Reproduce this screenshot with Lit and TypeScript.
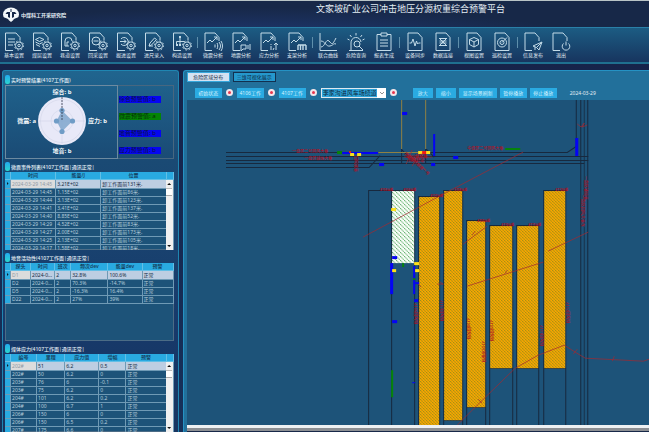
import { LitElement, html, svg, css } from "lit";
import { customElement, property } from "lit/decorators.js";
import { classMap } from "lit/directives/class-map.js";

const sheet = svg`<path d="M16 8V5.5L12 1H1.5v17.5H9"/>`;
const fullSheet = svg`<path d="M17 5.5L13 1H3v17.5h14z"/>`;
const gear = svg`<circle cx="15" cy="13.5" r="3.6"/><circle cx="15" cy="13.5" r="1.2"/><circle cx="15" cy="13.5" r="4.6" stroke-dasharray="1.6 2"/>`;
const trend = svg`<path d="M4 11l3-3 2 2 5-5M11 5h3v3"/>`;
const openSheet = svg`<path d="M16 9V5.5L12 1H2v17.5h7"/>`;

const icons: Record<string, unknown> = {
  base: svg`${sheet}${gear}<path d="M4 7h7M4 10h7M4 13h5"/>`,
  layers: svg`${sheet}${gear}<path d="M3.5 7.5l4-2 4.500 2-4.500 2zM3.500 10l4 2 3-1.500M4 12.500l4 2"/>`,
  arch: svg`${sheet}${gear}<path d="M5 14V9a3.500 3.500 0 0 1 7 0M5 14h4M7 14v-4h2"/>`,
  mining: svg`${sheet}${gear}<circle cx="8" cy="9" r="4"/><path d="M5.500 9h5"/>`,
  advance: svg`${sheet}${gear}<path d="M5 7a4 4 0 1 1 0 5M4 9.500h6M8 7.500l2 2-2 2"/>`,
  entry: svg`${sheet}${gear}<path d="M5 14l1-3 4.500-5 2 1.500-5 5.500zM5 14h4"/>`,
  tree: svg`${sheet}${gear}<path d="M8 5v4M4.500 13V9.500h8M8 9v4"/><path d="M7 5h2M4 13h2M7 13h2" stroke-width="2"/>`,
  wave: svg`${openSheet}${trend}<path d="M12 12.500v3M14 11c1 2 1 4 0 6M16 10c2 3 2 5 0 8M18 9c2 3 2 7 0 10"/>`,
  quake: svg`${openSheet}${trend}<path d="M10 13h5v4h-3l-2 2zM17 13v4M19 12v6"/>`,
  stress: svg`${openSheet}${trend}<path d="M12 14v4M12 12v1M17 11v7M15 13l2-2 2 2M14 18l1-2"/>`,
  frame: svg`${openSheet}${trend}<path d="M11 13h8M11 18v-5M13.500 18v-5M16 18v-5M19 18v-5" stroke-width="1.400"/>`,
  curves: svg`<path d="M2 1v17.500h17M3 15c4 0 5-9 8-6s3 5 7-3M3 9c4 0 5 6 9 5s3-3 6-2"/>`,
  alarm: svg`<path d="M3 18.500h14M5 18V11a5 5 0 0 1 10-1M10 1v2.500M4 3l1.500 2M16 3l-1.500 2M1.500 7l2 1M18.500 7l-2 1"/><circle cx="11" cy="12" r="3"/><path d="M13 14l4 4"/>`,
  report: svg`<path d="M7 2.500H3v16h14v-16h-4M7 1h6v3H7zM6 8h8M6 11h8M6 14h8"/>`,
  pulse: svg`${fullSheet}<path d="M4.500 11h2l1.500-4 2 7 1.500-5 1 3 1-1h2"/>`,
  link: svg`${fullSheet}<path d="M6 6.500h8M6 13.500h8M6.500 9h7M6.500 11h7M7 7l6 6M13 7l-6 6"/>`,
  cube: svg`${fullSheet}<path d="M10 5.500l4.500 2v5L10 15l-4.500-2.500v-5zM5.500 7.500L10 10l4.500-2.500M10 10v5"/>`,
  target: svg`${fullSheet}<circle cx="10" cy="10.500" r="4.500"/><circle cx="10" cy="10.500" r="2"/><path d="M10 10.500l5-5"/>`,
  plane: svg`${openSheet}<path d="M10 14l9-4-3 8-2.500-2.500zM13.500 15.500l5-5M12 15v3"/>`,
  power: svg`${openSheet}<path d="M12.500 11.500a3.800 3.800 0 1 0 5 0M15 9.500v4"/>`,
};

const tools: string[][][] = [
  [["base", "基本设置"], ["layers", "煤层设置"], ["arch", "巷道设置"], ["mining", "回采设置"], ["advance", "掘进设置"], ["entry", "进尺录入"], ["tree", "构造设置"]],
  [["wave", "微震分析"], ["quake", "地震分析"], ["stress", "应力分析"], ["frame", "支架分析"]],
  [["curves", "联合曲线"], ["alarm", "危险查询"], ["report", "报表生成"]],
  [["pulse", "设备同步"], ["link", "数据连接"]],
  [["cube", "视图设置"], ["target", "巡检设置"]],
  [["plane", "信息发布"], ["power", "退出"]],
];

const eventRows = [
  ["2024-03-29 14:45", "3.21E+02", "卸工作面前131米."],
  ["2024-03-29 14:45", "1.15E+02", "卸工作面前86米."],
  ["2024-03-29 14:44", "3.13E+02", "卸工作面前123米."],
  ["2024-03-29 14:41", "3.41E+02", "卸工作面前137米."],
  ["2024-03-29 14:40", "8.85E+02", "卸工作面前52米."],
  ["2024-03-29 14:29", "4.52E+02", "卸工作面前83米."],
  ["2024-03-29 14:27", "2.00E+02", "卸工作面前173米."],
  ["2024-03-29 14:25", "2.13E+02", "卸工作面前105米."],
  ["2024-03-29 14:17", "1.58E+02", "卸工作面前18米."],
];
const probeRows = [
  ["D1", "2024-0...", "2", "32.8%", "100.6%", "正常"],
  ["D2", "2024-0...", "2", "70.3%", "-14.7%", "正常"],
  ["D5", "2024-0...", "2", "-16.3%", "16.4%", "正常"],
  ["D22", "2024-0...", "2", "27%", "39%", "正常"],
];
const stressRows = [
  ["202#", "51", "6.2", "0.5", "正常"],
  ["202#", "50", "6.2", "0", "正常"],
  ["203#", "76", "6", "-0.1", "正常"],
  ["203#", "75", "6.2", "0", "正常"],
  ["204#", "101", "6.2", "0.2", "正常"],
  ["204#", "100", "6.7", "1", "正常"],
  ["206#", "150", "6", "0", "正常"],
  ["206#", "150", "6.5", "0.2", "正常"],
  ["207#", "175", "6.6", "0", "正常"],
];

@customElement("tool-bar")
class ToolBar extends LitElement {
  static styles = css`
    :host { display: flex; align-items: stretch; height: 34px; border-top: 1px solid #2a80a8; border-bottom: 2px solid #1f6f8f;
      background: linear-gradient(#1c5c83, #17355f); overflow: hidden; }
    .tool { width: 28px; padding: 4px 0 0; border: 0; background: none; color: #e2edf4; font: inherit; font-size: 5px; line-height: 7px;
      display: flex; flex-direction: column; align-items: center; flex: none; white-space: nowrap; }
    .icon { width: 20px; height: 20px; fill: none; stroke: #c3dbe8; stroke-width: 1; }
    .split { width: 1px; height: 11px; margin: 9px 1px 0; background: #5f8fab; flex: none; }
  `;
  render() {
    return tools.map((group, i) => html`${i ? html`<span class="split"></span>` : null}
      ${group.map(([icon, label]) => html`<button class="tool"><svg class="icon" viewBox="0 0 20 20">${icons[icon]}</svg><span>${label}</span></button>`)}`);
  }
}

@customElement("data-grid")
class DataGrid extends LitElement {
  @property({ attribute: false }) heads: string[] = [];
  @property({ attribute: false }) widths: number[] = [];
  @property({ attribute: false }) rows: string[][] = [];
  @property({ type: Boolean }) scroll = false;
  static styles = css`
    :host { display: block; position: relative; height: 100%; box-sizing: border-box; overflow: hidden; background: #1d5379; box-shadow: inset 0 0 0 1px #4c6c86; }
    table { width: 100%; table-layout: fixed; border-collapse: separate; border-spacing: 0; font-size: 5px; line-height: 7px; color: #b4ccdb; }
    th, td { padding: 0; height: 7px; border-right: 1px solid #6f9ab5; border-bottom: 1px solid #6f9ab5; white-space: nowrap; overflow: hidden; }
    th { background: #29aae1; color: #123450; font-weight: 500; border-color: #62bfe6; }
    td { padding-left: 1px; }
    .mark { background: #29aae1; padding: 0; color: #0b1a2a; text-align: center; }
    .on td { height: 8px; background: #bdcee2; color: #16293f; }
    .on .mark { background: #29aae1; }
    .on .key { background: #dcdcdc; color: #8f9aa5; }
    .bar { position: absolute; top: 8px; right: 1px; bottom: 0; width: 7px; background: #f0f0f0; color: #111;
      display: flex; flex-direction: column; align-items: center; }
    .arrow { width: 4px; height: 2px; margin: 3px 0; background: #111; clip-path: polygon(50% 0, 100% 100%, 0 100%); }
    .down { clip-path: polygon(0 0, 100% 0, 50% 100%); }
    .thumb { width: 6px; height: 6px; background: #fff; border-bottom: 1px solid #aaa; border-top: 1px solid #bbb; margin-bottom: auto; }
    .tri { display: inline-block; width: 2px; height: 4px; background: #0b1a2a; clip-path: polygon(0 0, 100% 50%, 0 100%); }
  `;
  render() {
    const total = this.widths.reduce((a, b) => a + b, 0) + 6;
    const part = (w: number) => `width:${(w / total) * 100}%`;
    return html`<table>
      <colgroup><col style=${part(6)}>${this.widths.map((w) => html`<col style=${part(w)}>`)}</colgroup>
      <thead><tr><th></th>${this.heads.map((h) => html`<th scope="col">${h}</th>`)}</tr></thead>
      <tbody>${this.rows.map((r, i) => html`<tr class=${classMap({ on: i === 0 })}>
        <td class="mark">${i === 0 ? html`<span class="tri"></span>` : null}</td>
        ${r.map((c, k) => html`<td class=${classMap({ key: k === 0 })}>${c}</td>`)}${this.scroll ? html`<td></td>` : null}</tr>`)}</tbody>
    </table>
    ${this.scroll ? html`<div class="bar"><span class="arrow"></span><span class="thumb"></span><span class="arrow down"></span></div>` : null}`;
  }
}

@customElement("risk-radar")
class RiskRadar extends LitElement {
  static styles = css`
    :host { display: grid; grid-template-columns: 32px 48px 1fr; grid-template-rows: 11px 48px 11px; align-items: center; justify-items: center;
      border: 1px solid #6d8aa0; font-size: 6px; line-height: 8px; font-weight: 700; color: #f2f7fa; white-space: nowrap; }
    .mid { grid-column: 2; }
    .left { grid-column: 1; justify-self: end; margin-right: 2px; }
    .right { grid-column: 3; justify-self: start; margin-left: 2px; }
    .dial { width: 48px; height: 48px; display: block; }
  `;
  render() {
    return html`<span class="mid">综合: b</span>
      <span class="left">微震: a</span>
      <svg class="dial" viewBox="0 0 48 48">
        <circle cx="24" cy="24" r="24" fill="#e8e9f8"/>
        <g fill="none" stroke="#d2d5e8" stroke-width=".6"><circle cx="24" cy="24" r="21.500"/><circle cx="24" cy="24" r="11"/><path d="M0 24h48M24 0v48"/></g>
        <path d="M24 13.500L34.500 24 24 34.500 18.500 24z" fill="#7fa6cc" opacity=".85"/>
        <g fill="#6f9cc6"><circle cx="24" cy="13.500" r="2.600"/><circle cx="34.500" cy="24" r="2.600"/><circle cx="24" cy="34.500" r="2.600"/><circle cx="18.500" cy="24" r="2.600"/></g>
        <path d="M24 0v24" stroke="#333a4c" stroke-width=".8" stroke-dasharray="2 1"/>
      </svg>
      <span class="right">应力: b</span>
      <span class="mid">地音: b</span>`;
  }
}

// [x, top, right, bottom] of each mined panel
const panels = [
  [419, 197, 439, 426], [444, 191, 462, 420], [467, 221, 485, 407],
  [490, 226, 512, 368], [517, 226, 538, 368], [544, 191, 565, 368],
];
const faceTags: [number, number, string][] = [
  [380, 191, "4105运顺"], [403, 191, "4106运顺"], [430, 197, "4107运顺"], [454, 191, "4108运顺"],
  [477, 222, "4109运顺"], [501, 226, "4110运顺"], [528, 226, "4111运顺"], [555, 191, "4112运顺"],
];
const sideTags: [number, number, string][] = [
  [415, 303, "4106回风顺"], [441, 300, "4107回风顺"], [468, 318, "4108回风顺"], [483, 341, "4109运输顺"], [491, 320, "4109回风顺"],
  [541, 325, "4111回风顺"], [567, 302, "4112回风顺"], [585, 176, "一盘区辅运巷"], [582, 195, "一盘区回风大巷东"], [355, 156, "回风联巷"],
];
const marks: [number, number, number, number, string][] = [
  [337, 151, 5, 3, "g"], [342, 152, 36, 2, "b"], [350, 153, 4, 3, "y"], [357, 153, 4, 3, "y"], [349, 151, 2, 2, "r"],
  [402, 112, 5, 3, "b"], [433, 134, 2, 22, "b"], [453, 156, 5, 3, "b"], [575, 138, 3, 18, "b"], [379, 163, 5, 3, "b"], [431, 163, 4, 3, "b"],
  [418, 151, 12, 3, "y"], [422, 151, 4, 3, "r"], [505, 148, 15, 2, "g"],
  [390, 263, 3, 31, "b"], [413, 266, 2, 28, "b"], [391, 208, 5, 3, "y"], [392, 256, 5, 3, "b"], [392, 269, 4, 3, "y"],
  [414, 262, 5, 3, "y"], [415, 269, 4, 3, "y"], [402, 263, 2, 4, "g"], [392, 320, 5, 3, "b"], [414, 299, 4, 3, "b"],
  [415, 282, 4, 2, "b"], [413, 278, 2, 2, "g"], [391, 370, 2, 27, "g"], [412, 382, 3, 1, "b"],
];

@customElement("mine-map")
class MineMap extends LitElement {
  static styles = css`
    :host { display: block; flex: 1; min-height: 0; background: #1d5379; overflow: hidden; }
    .map { display: block; width: 100%; height: 100%; }
    .rock { fill: none; stroke: #17293f; stroke-width: 1; }
    .faint { opacity: .75; }
    .gas { fill: none; stroke: #8f8144; }
    .fault { fill: none; stroke: #a3282f; stroke-width: .7; }
    .tag { fill: #b00d20; font-size: 3px; font-weight: 700; }
    .road { fill: #b01024; font-size: 4px; font-weight: 500; }
    .b { fill: #0404f5; } .g { fill: #06840b; } .y { fill: #ffe01a; } .r { fill: #f01818; }
  `;
  render() {
    return html`<svg class="map" viewBox="187 100 462 325" preserveAspectRatio="xMinYMin slice">
      <defs>
        <pattern id="gold" width="3" height="3" patternUnits="userSpaceOnUse"><rect width="3" height="3" fill="#fda700"/><path d="M0 0h1v1H0zM1 1h1v1H1zM2 2h1v1H2z" fill="#978d16"/></pattern>
        <pattern id="mint" width="4" height="4" patternUnits="userSpaceOnUse"><rect width="4" height="4" fill="#fbfffb"/><path d="M0 0h1v1H0zM1 1h1v1H1zM2 2h1v1H2zM3 3h1v1H3z" fill="#63b06c"/></pattern>
      </defs>
      <path class="rock" d="M226 152.500h341l9-6V100M226 156.500h362M226 160.500h362M226 163.500h358M226 167.500h143l11-12M357.500 152v15M401.500 149v15M425.500 149v15M401 149l12 12M426 149l8 8"/>
      <path class="rock" d="M580.500 100v326M587.500 100v326"/><path class="rock faint" d="M584 100v326" stroke-width="2"/>
      <path class="gas" d="M401.500 100v49M425.500 100v49M378 152.500h40"/>
      <path class="rock" d="M368.500 426V190.500H414M391.500 190v236M414.500 190v236"/>
      <rect x="392" y="191" width="22" height="72" fill="url(#mint)"/>
      ${panels.map(([l, t, r, b]) => svg`<path class="rock" d="M${l - 0.5} 426V${t - 0.5}H${r + 0.5}V426M${l} ${b}H${r}"/><rect x=${l} y=${t} width=${r - l} height=${b - t} fill="url(#gold)"/>`)}
      <path class="fault" d="M363 237l82-44 78-41M463 244l24-18M467 286l76-24M548 251l40-19M457 425l20-20 38-37 23-13 26-10 11 7 10 6 58 3 6-2M573 354l4-5M612 361l2-5M577 124l4 3 3-4-2 4 5-2M472 235l3-4M505 273l2-3"/>
      <path class="fault" d="M406 152l20 18M404 157h28M412 150l-6 14M420 152l-8 14M437 284h6l-3-2M417 283l4 4M478 399l4 4"/>
      ${marks.map(([x, y, w, h, c]) => svg`<rect class=${c} x=${x} y=${y} width=${w} height=${h}/>`)}
      <text class="road" x="292" y="153">一盘区二号回风大巷</text>
      <text class="road" x="304" y="160">一盘区辅运大巷</text>
      <text class="road" x="467" y="150">中盘区二号回风大巷</text>
      <text class="road" x="406" y="158">4107联络巷</text>
      <text class="road" x="408" y="162">回风绕道</text>
      <text class="road" transform="translate(404 154) rotate(42)">进风车场绕道一号</text>
      ${faceTags.map(([x, y, t]) => svg`<text class="tag" x=${x} y=${y}>${t}</text>`)}
      ${sideTags.map(([x, y, t]) => svg`<text class="road" transform="translate(${x - 1} ${y}) rotate(90)">${t}</text>`)}
    </svg>`;
  }
}

@customElement("app-root")
class AppRoot extends LitElement {
  static styles = css`
    :host { display: flex; flex-direction: column; height: 100vh; overflow: hidden; box-sizing: border-box; border-top: 1px solid #b9c4c6;
      background: #172848; color: #e4eef5; font-family: "Noto Sans", "Noto Sans CJK SC", sans-serif; font-size: 5px; line-height: 8px; }
    .top { display: grid; grid-template-columns: 1fr auto 1fr; align-items: start; height: 26px; flex: none;
      background: radial-gradient(ellipse at 40% 160%, #22406a 0, #1b3160 30%, #172848 60%); }
    .brand { display: flex; align-items: center; gap: 2px; padding: 6px 0 0 3px; font-weight: 700; }
    .logo { width: 16px; height: 15px; }
    .title { margin: 0; padding-left: 172px; font-size: 9px; line-height: 16px; font-weight: 400; white-space: nowrap; }
    .body { flex: 1; min-height: 0; display: flex; gap: 4px; padding: 6px 0 0 2px; background: linear-gradient(#16234a, #16315a); }
    .side { flex: 0 0 calc(27% + 2px); display: flex; flex-direction: column; gap: 2px; box-sizing: border-box; padding: 3px 4px 0 2px;
      border: 1px solid #1f86b2; border-bottom: 0; border-radius: 3px 3px 0 0; background: linear-gradient(#20658f, #1a4a74 90px, #17396a 260px, #173560); }
    .block { height: 89px; flex: none; display: flex; flex-direction: column; }
    .first { height: 85px; }
    .head { margin: 0; height: 11px; flex: none; display: flex; align-items: center; gap: 1px; font-size: 5px; font-weight: 500; line-height: 8px; white-space: nowrap; }
    .pill { width: 5px; height: 9px; border-radius: 2px; background: linear-gradient(#22a8ef, #2cd6cd); }
    .fill { flex: 1; min-height: 0; }
    .status { display: flex; flex: 1; }
    .radar { width: 113px; box-sizing: border-box; flex: none; }
    .levels { flex: 1; display: flex; flex-direction: column; gap: 10px; padding: 10px 0 0 1px; border: 1px solid #476780; border-left: 0; align-items: start; }
    .level { width: 42px; height: 7px; font-size: 6px; line-height: 7px; background: #0505f2; color: #0a1440; white-space: nowrap; overflow: hidden; }
    .ok { background: #048505; color: #042d0a; }
    .main { flex: 1; min-width: 0; display: flex; flex-direction: column; border: 1px solid #2592c4; border-width: 1px 0 0 1px; border-radius: 3px 0 0 0;
      background: #22709b; padding-left: 3px; }
    .tabs { display: flex; gap: 3px; padding-top: 1px; flex: none; }
    .tab { width: 43px; height: 10px; padding: 0; font: inherit; line-height: 8px; border: 1px solid #36a7dc; background: #d4e2f2; color: #15263c; white-space: nowrap; }
    .off { background: #2598cc; border: 1px solid #12304f; color: #0d2740; }
    .bar { display: flex; align-items: center; box-sizing: border-box; height: 18px; flex: none; padding: 3px 0 0 8px; }
    .group { display: flex; align-items: center; gap: 4px; }
    .btn { height: 10px; padding: 0; width: 27px; border: 0; background: #2aabe2; color: #d9f2fd; font: inherit; line-height: 8px; white-space: nowrap; }
    .small { width: 20px; }
    .wide { width: 38px; }
    .dot { width: 3px; height: 3px; border: 2px solid #f3e6ea; border-radius: 50%; background: #e8384f; box-shadow: inset 0 0 0 2px #e8384f; }
    .pick { position: relative; width: 65px; height: 10px; display: flex; }
    .select { appearance: none; width: 100%; height: 10px; padding: 0 9px 0 1px; border: 1px solid #dfe8ee; border-radius: 0; background: #2ea3d9; color: #0c2338; font: inherit; font-size: 6px; line-height: 8px; }
    .chev { position: absolute; right: 0; top: 0; width: 9px; height: 10px; background: #fff; pointer-events: none; }
    .ops { display: flex; gap: 3px; margin-left: 16px; }
    .date { margin-left: 13px; }
    .hscroll { height: 3px; flex: none; background: #8c8f93; border-top: 3px solid #eef1f3; }
    .foot { height: 1px; flex: none; background: #172848; }
  `;
  private head(text: string) {
    return html`<h2 class="head"><span class="pill"></span>${text}</h2>`;
  }
  render() {
    return html`
      <header class="top">
        <div class="brand">
          <svg class="logo" viewBox="0 0 16 15"><ellipse cx="8" cy="7.500" rx="8" ry="7" fill="#f4f8fa"/><path d="M4 5h3v6l-2-1V7H2.500zM12 5H9v6l2-1V7h2.500zM7.500 2h1v3h-1z" fill="#172848"/><path d="M0 10l4 1.500L8 14l4-2.500L16 10l-3 5H3z" fill="#172848"/><path d="M5 12.500h6L8 15z" fill="#f4f8fa"/></svg>
          <span>中煤科工开采研究院</span>
        </div>
        <h1 class="title">文家坡矿业公司冲击地压分源权重综合预警平台</h1>
      </header>
      <tool-bar></tool-bar>
      <div class="body">
        <aside class="side">
          <section class="block first">${this.head("实时预警结果(4107工作面)")}
            <div class="status"><risk-radar class="radar"></risk-radar>
              <div class="levels"><span class="level">综合预警值: b</span><span class="level ok">微震预警值: a</span><span class="level">地音预警值: b</span><span class="level">应力预警值: b</span></div>
            </div>
          </section>
          <section class="block">${this.head("微震事件列表(4107工作面|通讯正常|")}
            <data-grid class="fill" scroll .heads=${["时间", "能量/J", "位置", ""]} .widths=${[45, 45, 65, 7]} .rows=${eventRows}></data-grid></section>
          <section class="block">${this.head("地音活动性(4107工作面|通讯正常|")}
            <data-grid class="fill" .heads=${["探头", "时间", "班次", "频次dev", "能量dev", "预警"]} .widths=${[20, 24, 16, 37, 34, 31]} .rows=${probeRows}></data-grid></section>
          <section class="block">${this.head("煤体应力(4107工作面|通讯正常|")}
            <data-grid class="fill" scroll .heads=${["编号", "里程", "应力值", "增幅", "预警", ""]} .widths=${[26, 28, 34, 27, 40, 7]} .rows=${stressRows}></data-grid></section>
        </aside>
        <main class="main">
          <nav class="tabs"><button class="tab">危险区域分布</button><button class="tab off">三维可视化展示</button></nav>
          <div class="bar">
            <div class="group">
              <button class="btn">初始状态</button><span class="dot"></span><button class="btn">4106工作</button><span class="dot"></span>
              <button class="btn">4107工作</button><span class="dot"></span>
              <label class="pick"><select class="select" aria-label="巷道"><option>李家沟进风车场绕道</option></select>
                <svg class="chev" viewBox="0 0 9 10"><path d="M3 4l2 2 2-2" fill="none" stroke="#777" stroke-width=".8"/></svg></label>
              <span class="dot"></span>
            </div>
            <div class="ops"><button class="btn small">放大</button><button class="btn small">缩小</button><button class="btn wide">显示场景刷新</button><button class="btn">暂停播放</button><button class="btn">停止播放</button></div>
            <time class="date">2024-03-29</time>
          </div>
          <mine-map></mine-map>
          <div class="hscroll"></div><div class="foot"></div>
        </main>
      </div>`;
  }
}
